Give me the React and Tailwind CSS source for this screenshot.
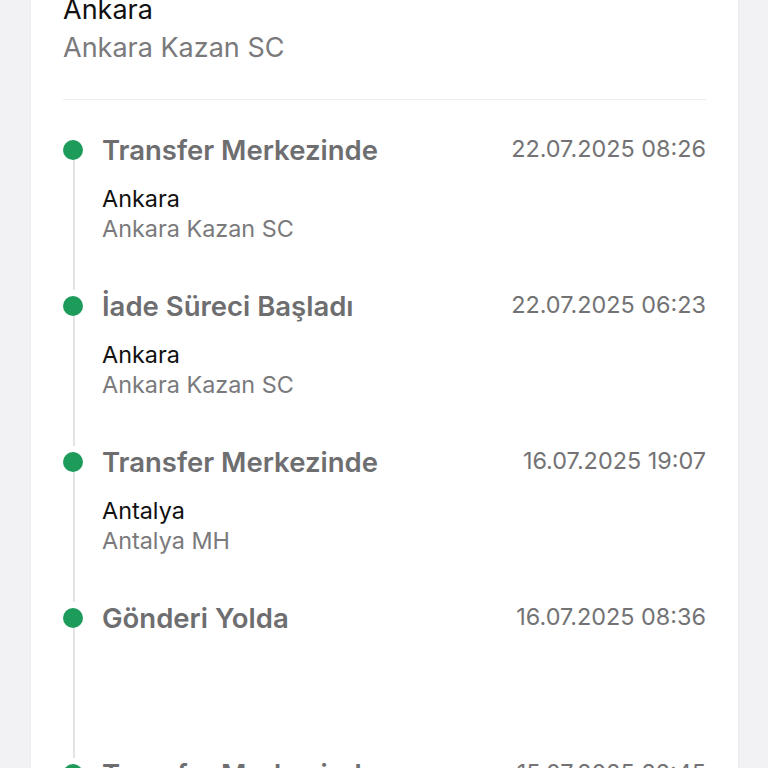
const events = [
  { title: 'Transfer Merkezinde', date: '22.07.2025 08:26', city: 'Ankara', branch: 'Ankara Kazan SC' },
  { title: 'İade Süreci Başladı', date: '22.07.2025 06:23', city: 'Ankara', branch: 'Ankara Kazan SC' },
  { title: 'Transfer Merkezinde', date: '16.07.2025 19:07', city: 'Antalya', branch: 'Antalya MH' },
  { title: 'Gönderi Yolda', date: '16.07.2025 08:36', city: '', branch: '' },
  { title: 'Transfer Merkezinde', date: '15.07.2025 22:45', city: 'İstanbul', branch: 'İstanbul TM' },
];

const TimelineItem = ({ item }) => (
  <div className="flex h-[156px]">
    <div className="flex w-[20px] flex-col items-center pt-[6px]">
      <div className="h-[20px] w-[20px] shrink-0 rounded-full bg-[#1c9b5b]" />
      <div className="ml-[2px] w-[2px] flex-1 bg-[#e4e4e6]" />
    </div>
    <div className="ml-[19px] flex-1">
      <div className="flex items-start justify-between">
        <h3 className="text-[27.5px] font-semibold leading-[32px] text-[#6e6e70]">{item.title}</h3>
        <span className="text-[23.4px] leading-[30px] text-[#737375]">{item.date}</span>
      </div>
      {item.city && (
        <div className="mt-[18px]">
          <p className="text-[23.4px] leading-[30px] text-[#111]">{item.city}</p>
          <p className="text-[23.4px] leading-[30px] text-[#7a7a7c]">{item.branch}</p>
        </div>
      )}
    </div>
  </div>
);

const App = () => {
  return (
    <div
      className="h-screen overflow-hidden bg-[#f2f2f4]"
      style={{ fontFamily: 'Inter, "Noto Sans", sans-serif' }}
    >
      <div className="ml-[31px] w-[707px] bg-white px-[32px] shadow-[0_0_3px_rgba(0,0,0,0.06)]">
        <div className="-mt-[9px]">
          <p className="text-[27px] leading-[38px] text-[#111]">Ankara</p>
          <p className="text-[27px] leading-[38px] text-[#7a7a7c]">Ankara Kazan SC</p>
        </div>
        <div className="mt-[32px] h-px bg-[#ededee]" />
        <div className="pt-[34px]">
          {events.map((e, i) => (
            <TimelineItem key={i} item={e} />
          ))}
        </div>
      </div>
    </div>
  );
};

export default App;
